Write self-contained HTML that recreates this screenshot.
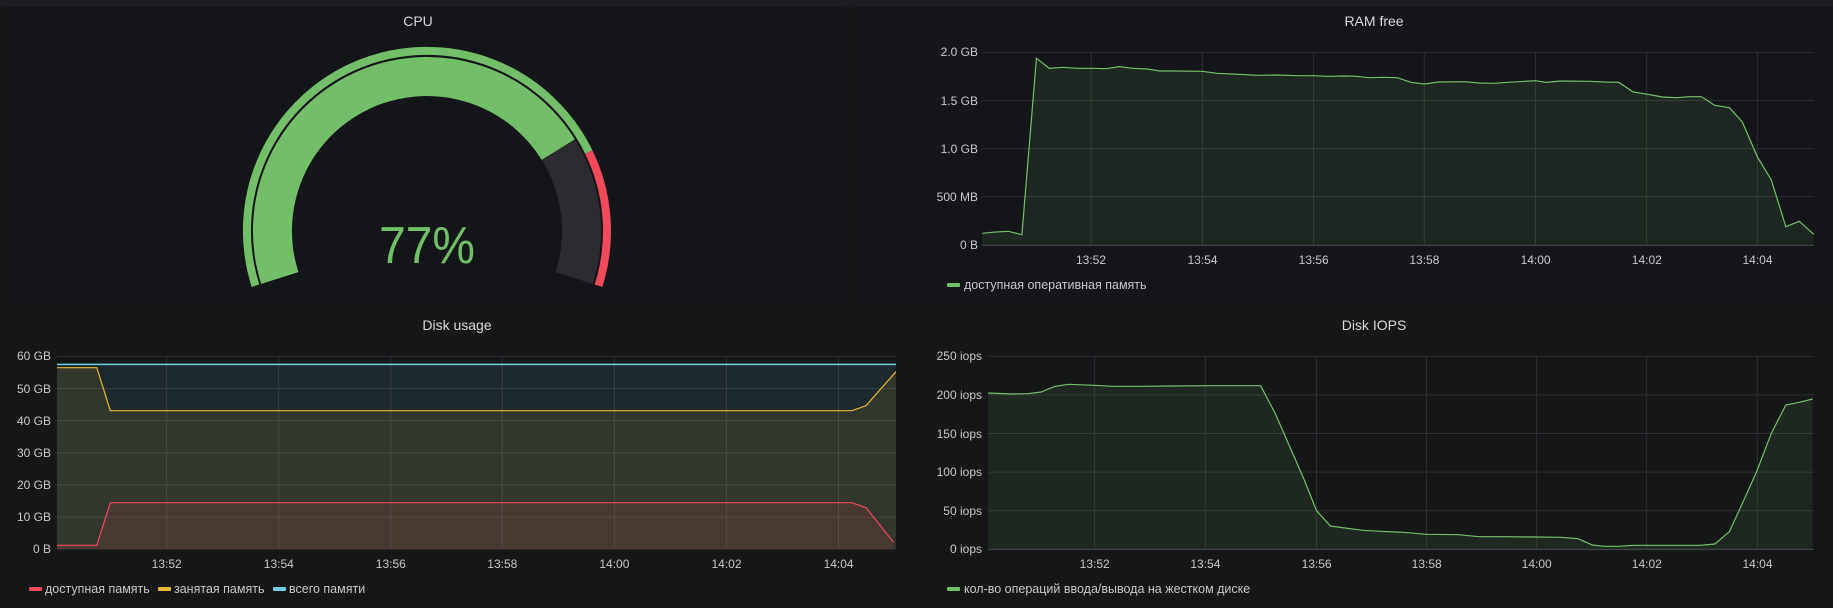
<!DOCTYPE html>
<html><head><meta charset="utf-8">
<style>
html,body{margin:0;padding:0;}
body{width:1833px;height:608px;background:#161719;position:relative;overflow:hidden;font-family:"Liberation Sans","DejaVu Sans",sans-serif;}
.top{position:absolute;left:0;top:0;width:1833px;height:7px;background:#1c1d20;}
.pan{position:absolute;background:#141619;}
.t{position:absolute;color:#d8d9da;font-size:14px;transform:translate(-50%,-50%);white-space:nowrap;}
.yl{position:absolute;color:#c7c8ca;font-size:12px;transform:translateY(-50%);text-align:right;white-space:nowrap;}
.xl{position:absolute;color:#c7c8ca;font-size:12px;transform:translate(-50%,-50%);white-space:nowrap;}
.lg{position:absolute;color:#c7c8ca;font-size:12.5px;transform:translateY(-50%);white-space:nowrap;}
.mk{position:absolute;width:13px;height:4px;border-radius:1px;transform:translateY(-50%);}
svg{position:absolute;overflow:visible;}
</style></head><body>
<div class="top"></div>
<div class="pan" style="left:7px;top:7px;width:838px;height:295px;"></div>
<div class="pan" style="left:857px;top:7px;width:976px;height:295px;"></div>

<!-- CPU gauge -->
<div class="t" style="left:418px;top:21px;">CPU</div>
<svg style="left:0;top:0" width="850" height="310" viewBox="0 0 850 310">
 <path d="M279.8 278 A154.5 154.5 0 0 1 558.3 149.6" fill="none" stroke="#73bf69" stroke-width="39"/>
 <path d="M558.3 149.6 A154.5 154.5 0 0 1 574.2 278" fill="none" stroke="#2c2c30" stroke-width="39"/>
 <path d="M255.5 285.7 A180 180 0 0 1 588.8 152.1" fill="none" stroke="#73bf69" stroke-width="8"/>
 <path d="M588.8 152.1 A180 180 0 0 1 598.5 285.7" fill="none" stroke="#f2495c" stroke-width="8"/>
 <text x="427" y="263" text-anchor="middle" fill="#73bf69" font-size="52" font-family="Liberation Sans, sans-serif" transform="translate(427 0) scale(0.92 1) translate(-427 0)">77%</text>
</svg>

<!-- RAM free -->
<div class="t" style="left:1374px;top:21px;">RAM free</div>
<svg style="left:920px;top:0" width="913" height="310" viewBox="0 0 1568 930" preserveAspectRatio="none">
 <g stroke="#2f3033" stroke-width="1" vector-effect="non-scaling-stroke" fill="none">
  <path vector-effect="non-scaling-stroke" d="M107 157H1535M107 301.5H1535M107 446H1535M107 590H1535M294 157V736M485 157V736M676 157V736M866 157V736M1057 157V736M1248 157V736M1438 157V736"/>
 </g>
 <path d="M107 700 130 696 152 694 175 704 200 175 222 205 245 202 270 205 295 205 320 206 342 200 365 205 390 207 412 213 440 213 485 214 510 220 535 222 580 226 610 225 650 227 676 227 700 229 730 228 750 229 770 233 795 232 820 233 843 247 866 252 890 246 935 245 960 249 985 250 1010 247 1057 242 1075 247 1100 243 1150 244 1175 246 1200 247 1225 276 1250 283 1275 291 1300 293 1320 290 1342 290 1365 316 1390 323 1412 365 1438 470 1462 540 1487 680 1510 664 1535 703 L1535 736 L107 736Z" fill="rgba(115,191,105,0.1)"/>
 <path vector-effect="non-scaling-stroke" d="M107 700 130 696 152 694 175 704 200 175 222 205 245 202 270 205 295 205 320 206 342 200 365 205 390 207 412 213 440 213 485 214 510 220 535 222 580 226 610 225 650 227 676 227 700 229 730 228 750 229 770 233 795 232 820 233 843 247 866 252 890 246 935 245 960 249 985 250 1010 247 1057 242 1075 247 1100 243 1150 244 1175 246 1200 247 1225 276 1250 283 1275 291 1300 293 1320 290 1342 290 1365 316 1390 323 1412 365 1438 470 1462 540 1487 680 1510 664 1535 703" fill="none" stroke="#73bf69" stroke-width="1.2"/>
 <path vector-effect="non-scaling-stroke" d="M107 736H1535" stroke="#4a4b4e" stroke-width="1"/>
</svg>
<div class="yl" style="right:855px;top:52px;">2.0 GB</div>
<div class="yl" style="right:855px;top:100.5px;">1.5 GB</div>
<div class="yl" style="right:855px;top:149px;">1.0 GB</div>
<div class="yl" style="right:855px;top:197px;">500 MB</div>
<div class="yl" style="right:855px;top:245px;">0 B</div>
<div class="xl" style="left:1091px;top:260px;">13:52</div>
<div class="xl" style="left:1202.5px;top:260px;">13:54</div>
<div class="xl" style="left:1313.7px;top:260px;">13:56</div>
<div class="xl" style="left:1424.4px;top:260px;">13:58</div>
<div class="xl" style="left:1535.6px;top:260px;">14:00</div>
<div class="xl" style="left:1646.8px;top:260px;">14:02</div>
<div class="xl" style="left:1757.5px;top:260px;">14:04</div>
<div class="mk" style="left:947px;top:285px;background:#73bf69;"></div>
<div class="lg" style="left:964px;top:285px;">доступная оперативная память</div>

<!-- Disk usage -->
<div class="t" style="left:457px;top:325px;">Disk usage</div>
<svg style="left:0;top:310px" width="920" height="298" viewBox="0 0 1568 894" preserveAspectRatio="none">
 <path vector-effect="non-scaling-stroke" d="M97 139H1527M97 235.5H1527M97 332H1527M97 428.5H1527M97 525H1527M97 621.5H1527M284 139V718M475 139V718M666 139V718M856 139V718M1047 139V718M1238 139V718M1429 139V718" stroke="#2f3033" stroke-width="1" fill="none"/>
 <path d="M97 163H1527V718H97Z" fill="rgba(110,208,224,0.1)"/>
 <path d="M97 173 165 173 188 302 1452 302 1476 287 1527 185 L1527 718 97 718Z" fill="rgba(234,184,57,0.1)"/>
 <path d="M97 706 165 706 188 578 1452 578 1476 593 1523 697 L1523 718 97 718Z" fill="rgba(242,73,92,0.12)"/>
 <path vector-effect="non-scaling-stroke" d="M97 163H1527" stroke="#6ed0e0" stroke-width="1.5" fill="none"/>
 <path vector-effect="non-scaling-stroke" d="M97 173 165 173 188 302 1452 302 1476 287 1527 185" stroke="#eab839" stroke-width="1.2" fill="none"/>
 <path vector-effect="non-scaling-stroke" d="M97 706 165 706 188 578 1452 578 1476 593 1523 697" stroke="#f2495c" stroke-width="1.2" fill="none"/>
</svg>
<div class="yl" style="right:1782px;top:356.3px;">60 GB</div>
<div class="yl" style="right:1782px;top:388.5px;">50 GB</div>
<div class="yl" style="right:1782px;top:420.7px;">40 GB</div>
<div class="yl" style="right:1782px;top:452.8px;">30 GB</div>
<div class="yl" style="right:1782px;top:485px;">20 GB</div>
<div class="yl" style="right:1782px;top:517.2px;">10 GB</div>
<div class="yl" style="right:1782px;top:549.3px;">0 B</div>
<div class="xl" style="left:166.7px;top:564px;">13:52</div>
<div class="xl" style="left:278.8px;top:564px;">13:54</div>
<div class="xl" style="left:390.8px;top:564px;">13:56</div>
<div class="xl" style="left:502.3px;top:564px;">13:58</div>
<div class="xl" style="left:614.4px;top:564px;">14:00</div>
<div class="xl" style="left:726.5px;top:564px;">14:02</div>
<div class="xl" style="left:838.6px;top:564px;">14:04</div>
<div class="mk" style="left:29px;top:589px;background:#f2495c;"></div>
<div class="lg" style="left:45px;top:589px;">доступная память</div>
<div class="mk" style="left:158px;top:589px;background:#eab839;"></div>
<div class="lg" style="left:174px;top:589px;">занятая память</div>
<div class="mk" style="left:273px;top:589px;background:#6ed0e0;"></div>
<div class="lg" style="left:289px;top:589px;">всего памяти</div>

<!-- Disk IOPS -->
<div class="t" style="left:1374px;top:325px;">Disk IOPS</div>
<svg style="left:920px;top:310px" width="913" height="298" viewBox="0 0 1568 894" preserveAspectRatio="none">
 <path vector-effect="non-scaling-stroke" d="M117 139H1535M117 254.8H1535M117 370.6H1535M117 486.4H1535M117 602.2H1535M300 139V718M490 139V718M681 139V718M870 139V718M1059 139V718M1248 139V718M1438 139V718" stroke="#2f3033" stroke-width="1" fill="none"/>
 <path d="M117 249 160 252 185 251 208 246 232 229 255 223 300 226 330 229 380 229 430 228 500 227 585 227 610 310 635 410 660 510 681 602 705 648 730 654 760 661 790 664 830 667 870 673 925 674 960 680 1000 680 1059 681 1100 682 1130 686 1155 705 1175 709 1200 709 1225 706 1280 706 1340 706 1365 702 1390 665 1415 570 1438 480 1462 370 1487 285 1510 277 1533 267 L1533 718 117 718Z" fill="rgba(115,191,105,0.1)"/>
 <path vector-effect="non-scaling-stroke" d="M117 249 160 252 185 251 208 246 232 229 255 223 300 226 330 229 380 229 430 228 500 227 585 227 610 310 635 410 660 510 681 602 705 648 730 654 760 661 790 664 830 667 870 673 925 674 960 680 1000 680 1059 681 1100 682 1130 686 1155 705 1175 709 1200 709 1225 706 1280 706 1340 706 1365 702 1390 665 1415 570 1438 480 1462 370 1487 285 1510 277 1533 267" stroke="#73bf69" stroke-width="1.2" fill="none"/>
 <path vector-effect="non-scaling-stroke" d="M117 718H1535" stroke="#4a4b4e" stroke-width="1"/>
</svg>
<div class="yl" style="right:851px;top:356.3px;">250 iops</div>
<div class="yl" style="right:851px;top:394.9px;">200 iops</div>
<div class="yl" style="right:851px;top:433.5px;">150 iops</div>
<div class="yl" style="right:851px;top:472.1px;">100 iops</div>
<div class="yl" style="right:851px;top:510.7px;">50 iops</div>
<div class="yl" style="right:851px;top:549.3px;">0 iops</div>
<div class="xl" style="left:1094.7px;top:564px;">13:52</div>
<div class="xl" style="left:1205.4px;top:564px;">13:54</div>
<div class="xl" style="left:1316.6px;top:564px;">13:56</div>
<div class="xl" style="left:1426.7px;top:564px;">13:58</div>
<div class="xl" style="left:1536.7px;top:564px;">14:00</div>
<div class="xl" style="left:1646.8px;top:564px;">14:02</div>
<div class="xl" style="left:1757.5px;top:564px;">14:04</div>
<div class="mk" style="left:947px;top:589px;background:#73bf69;"></div>
<div class="lg" style="left:964px;top:589px;">кол-во операций ввода/вывода на жестком диске</div>
</body></html>
